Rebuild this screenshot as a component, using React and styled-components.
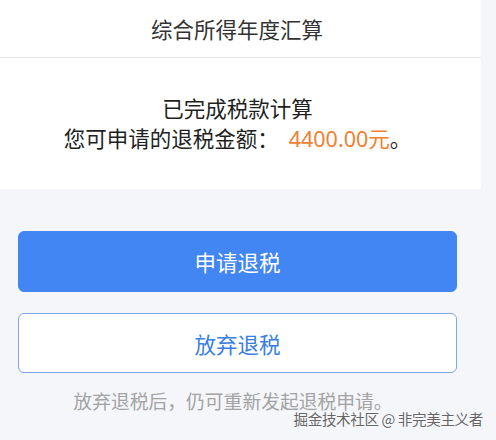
import React from "react";
import styled, { createGlobalStyle } from "styled-components";

const Global = createGlobalStyle`
  html, body { margin: 0; padding: 0; background: #f5f6fa; }
  body { font-family: "Noto Sans CJK SC", "Noto Sans", sans-serif; }
`;

const Page = styled.div`
  width: 496px;
  height: 440px;
  position: relative;
  overflow: hidden;
  background: #f5f6fa;
`;

const Panel = styled.section`
  width: 481px;
  background: #fff;
  display: flex;
  flex-direction: column;
`;

const Header = styled.header`
  height: 57px;
  display: flex;
  align-items: center;
  justify-content: center;
  border-bottom: 1px solid #e6e6e6;
  font-size: 21.5px;
  color: #333;
  padding-right: 7px;
`;

const Result = styled.div`
  height: 131px;
  display: flex;
  flex-direction: column;
  align-items: center;
  justify-content: center;
  font-size: 21.5px;
  line-height: 30px;
  color: #1f1f1f;
  padding-right: 6px;
`;

const Amount = styled.span`
  color: #f0802f;
  font-family: "Noto Sans", "Noto Sans CJK SC", sans-serif;
  margin-left: 10px;
`;

const Actions = styled.div`
  padding: 42px 0 0 18px;
  display: flex;
  flex-direction: column;
  gap: 21px;
  width: 439px;
`;

const Button = styled.button`
  box-sizing: border-box;
  width: 439px;
  height: ${(p) => (p.$primary ? 61 : 60)}px;
  border-radius: 6px;
  font-family: inherit;
  font-size: 21.5px;
  cursor: pointer;
  border: 1px solid ${(p) => (p.$primary ? "#4286f4" : "#7ea6ea")};
  background: ${(p) => (p.$primary ? "#4286f4" : "#ffffff")};
  color: ${(p) => (p.$primary ? "#ffffff" : "#3a7ee4")};
  padding: 0;
`;

const Note = styled.p`
  margin: 18px 0 0;
  width: 466px;
  text-align: center;
  font-size: 18.8px;
  line-height: 19px;
  color: #a3a3a3;
`;

const Watermark = styled.div`
  position: absolute;
  right: 13px;
  bottom: 15px;
  font-size: 14.6px;
  line-height: 12px;
  color: #666;
  text-shadow: 0 0 2px #fff;
  letter-spacing: -0.4px;
`;

export default function App() {
  return (
    <Page>
      <Global />
      <Panel>
        <Header>综合所得年度汇算</Header>
        <Result>
          <div>已完成税款计算</div>
          <div>
            您可申请的退税金额：<Amount>4400.00元</Amount>。
          </div>
        </Result>
      </Panel>
      <Actions>
        <Button $primary>申请退税</Button>
        <Button>放弃退税</Button>
      </Actions>
      <Note>放弃退税后，仍可重新发起退税申请。</Note>
      <Watermark>掘金技术社区 @ 非完美主义者</Watermark>
    </Page>
  );
}
